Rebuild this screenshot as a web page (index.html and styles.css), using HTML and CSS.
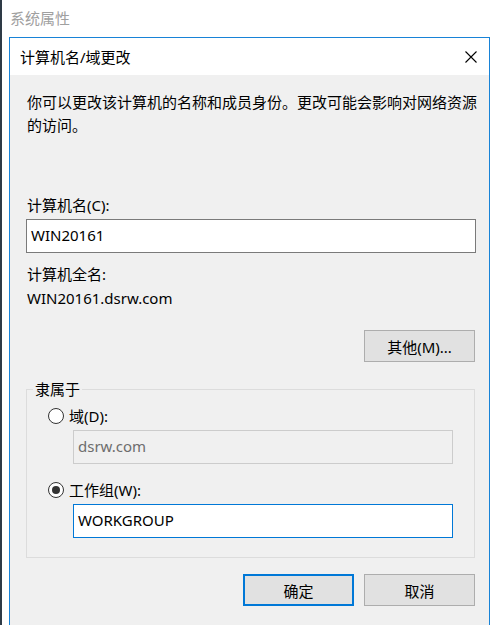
FILE: index.html
```html
<!DOCTYPE html>
<html lang="zh-CN">
<head>
    <meta charset="UTF-8">
    <meta name="viewport" content="width=device-width, initial-scale=1.0">
    <title>计算机名/域更改</title>
    <link rel="stylesheet" href="styles.css">
</head>
<body>

    <div class="parent-window">
        <div class="parent-title">系统属性</div>

        <div class="dialog">
            <div class="title-bar">
                <span class="title-text">计算机名/域更改</span>
                <span class="close-btn">
                    <svg width="12" height="12" viewBox="0 0 12 12">
                        <path d="M0.5 0.5 L11.5 11.5 M11.5 0.5 L0.5 11.5" stroke="#000" stroke-width="1.1" fill="none"/>
                    </svg>
                </span>
            </div>

            <div class="content">
                <p class="intro">你可以更改该计算机的名称和成员身份。更改可能会影响对网络资源的访问。</p>

                <label class="field-label">计算机名(C):</label>
                <div class="textbox">WIN20161</div>

                <div class="field-label label-gap">计算机全名:</div>
                <div class="full-name">WIN20161.dsrw.com</div>

                <div class="more-row">
                    <button class="win-btn">其他(M)...</button>
                </div>

                <fieldset class="group">
                    <legend>隶属于</legend>
                    <div class="group-body">
                        <div class="radio-row">
                            <span class="radio"></span>
                            <span>域(D):</span>
                        </div>
                        <div class="textbox sub disabled">dsrw.com</div>

                        <div class="radio-row second">
                            <span class="radio checked"></span>
                            <span>工作组(W):</span>
                        </div>
                        <div class="textbox sub focused">WORKGROUP</div>
                    </div>
                </fieldset>

                <div class="footer">
                    <button class="win-btn default">确定</button>
                    <button class="win-btn">取消</button>
                </div>
            </div>
        </div>
    </div>

</body>
</html>
```

FILE: styles.css
```css
body {
    margin: 0;
    background: #fff;
    font-family: "Noto Sans", "Noto Sans CJK SC", sans-serif;
    font-size: 15px;
    color: #000;
}

.parent-window {
    height: 625px;
    border-left: 2px solid #2e3a46;
    overflow: hidden;
}

.parent-title {
    height: 37px;
    padding-left: 8px;
    line-height: 37px;
    color: #a0a0a0;
}

.dialog {
    margin-left: 7px;
    margin-right: 3px;
    height: 600px;
    border: 1px solid #1883d7;
    background: #f0f0f0;
}

.title-bar {
    height: 37px;
    background: #fff;
    display: flex;
    align-items: center;
    justify-content: space-between;
    padding: 0 12px 0 10px;
}

.close-btn {
    display: flex;
    align-items: center;
}

.content {
    padding: 16px 13px 0 17px;
}

/* the text runs a little past the inputs before wrapping */
.intro {
    margin: 0 -8px 0 0;
    line-height: 23px;
}

.field-label {
    display: block;
    line-height: 20px;
    margin-top: 58px;
    margin-bottom: 4px;
}

.field-label.label-gap {
    margin-top: 11px;
    margin-bottom: 4px;
}

.textbox {
    height: 32px;
    line-height: 31px;
    padding-left: 4px;
    border: 1px solid #7a7a7a;
    background: #fff;
    box-sizing: content-box;
    margin-left: -1px;
}

.full-name {
    line-height: 20px;
}

.more-row {
    display: flex;
    justify-content: flex-end;
    margin-top: 22px;
    margin-right: 1px;
}

.win-btn {
    width: 111px;
    height: 32px;
    background: #e1e1e1;
    border: 1px solid #adadad;
    font-family: inherit;
    font-size: 15px;
    color: #000;
    padding: 0;
}

.win-btn.default {
    border: 2px solid #0078d7;
}

.group {
    margin: 17px 1px 0 -1px;
    padding: 0;
    border: 1px solid #dcdcdc;
}

.group legend {
    margin-left: 6px;
    padding: 0 2px;
    line-height: 20px;
}

.group-body {
    padding: 7px 21px 19px 21px;
}

.radio-row {
    display: flex;
    align-items: center;
    gap: 5px;
    line-height: 20px;
}

.radio-row.second {
    margin-top: 16px;
}

.radio {
    width: 14px;
    height: 14px;
    border: 1px solid #333;
    border-radius: 50%;
    background: #fff;
    display: flex;
    align-items: center;
    justify-content: center;
}

.radio.checked::after {
    content: "";
    width: 8px;
    height: 8px;
    border-radius: 50%;
    background: #333;
}

.textbox.sub {
    margin: 4px 0 0 25px;
}

.textbox.disabled {
    background: #f0f0f0;
    border-color: #cccccc;
    color: #6d6d6d;
}

.textbox.focused {
    border-color: #0078d7;
}

.footer {
    display: flex;
    justify-content: flex-end;
    gap: 10px;
    margin-top: 16px;
    margin-right: 1px;
}
```
